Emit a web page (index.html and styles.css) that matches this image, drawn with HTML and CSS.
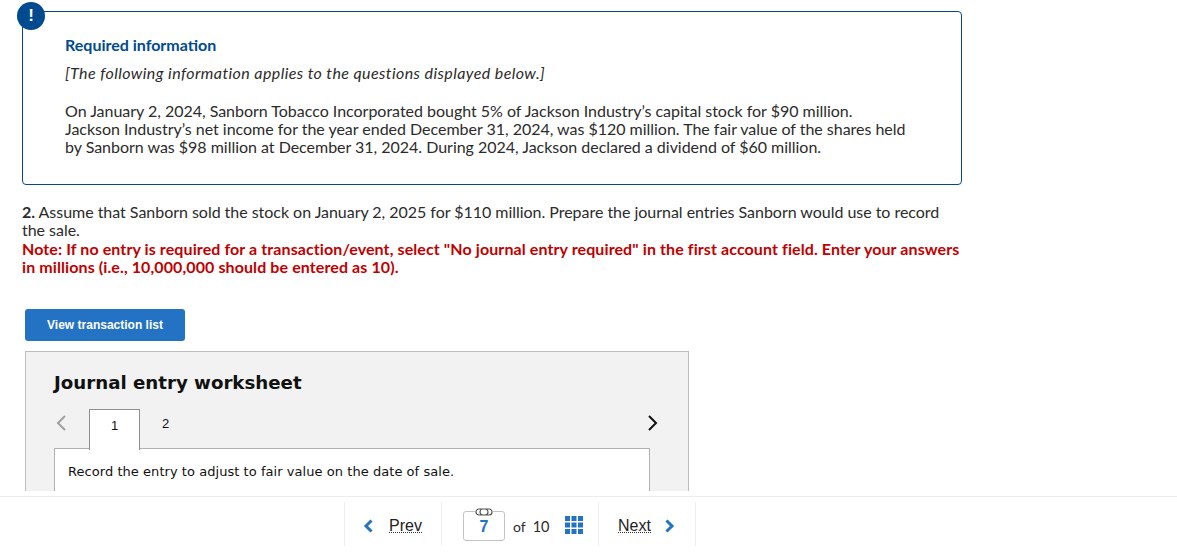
FILE: index.html
```html
<!DOCTYPE html>
<html lang="en">
<head>
<meta charset="utf-8">
<title>Required information</title>
<link rel="stylesheet" href="styles.css">
</head>
<body>
<main class="content">
  <section class="info-box">
    <span class="badge">!</span>
    <h2 class="info-title">Required information</h2>
    <p class="info-note">[The following information applies to the questions displayed below.]</p>
    <p class="info-text">On January 2, 2024, Sanborn Tobacco Incorporated bought 5% of Jackson Industry’s capital stock for $90 million. Jackson Industry’s net income for the year ended December 31, 2024, was $120 million. The fair value of the shares held by Sanborn was $98 million at December 31, 2024. During 2024, Jackson declared a dividend of $60 million.</p>
  </section>
  <section class="question">
    <p class="q-text"><strong>2.</strong> Assume that Sanborn sold the stock on January 2, 2025 for $110 million. Prepare the journal entries Sanborn would use to record the sale.</p>
    <p class="q-note">Note: If no entry is required for a transaction/event, select "No journal entry required" in the first account field. Enter your answers in millions (i.e., 10,000,000 should be entered as 10).</p>
  </section>
  <button class="view-btn" type="button">View transaction list</button>
  <section class="worksheet">
    <h3 class="ws-title">Journal entry worksheet</h3>
    <div class="ws-tabs">
      <svg class="chev" width="14" height="18" viewBox="0 0 14 18"><path d="M11 2 4 9l7 7" fill="none" stroke="#a0a0a0" stroke-width="2"/></svg>
      <span class="tab active">1</span>
      <span class="tab">2</span>
      <svg class="chev next" width="14" height="18" viewBox="0 0 14 18"><path d="M3 2l7 7-7 7" fill="none" stroke="#111" stroke-width="2"/></svg>
    </div>
    <div class="ws-body">Record the entry to adjust to fair value on the date of sale.</div>
  </section>
</main>
<footer class="footer">
  <nav class="pager">
    <a class="nav-btn prev">
      <svg width="12" height="16" viewBox="0 0 12 16"><path d="M9.500 2.500 4 8l5.500 5.500" fill="none" stroke="#2472c4" stroke-width="3"/></svg>
      <span class="nav-label">Prev</span>
    </a>
    <div class="pages">
      <div class="page-box">
        <svg class="link" width="18" height="8" viewBox="0 0 18 8"><path d="M8 1H4a3 3 0 0 0 0 6h6a3 3 0 0 0 0-6M10 7h4a3 3 0 0 0 0-6H8a3 3 0 0 0 0 6" fill="none" stroke="#555" stroke-width="1.200"/></svg>
        7
      </div>
      <span class="of">of</span><span class="total">10</span>
      <svg class="grid-icon" width="18" height="18" viewBox="0 0 18 18"><path fill="#2472c4" d="M0 0h5v5H0zM6.500 0h5v5h-5zM13 0h5v5h-5zM0 6.500h5v5H0zM6.500 6.500h5v5h-5zM13 6.500h5v5h-5zM0 13h5v5H0zM6.500 13h5v5h-5zM13 13h5v5h-5z"/></svg>
    </div>
    <a class="nav-btn next-btn">
      <span class="nav-label">Next</span>
      <svg width="12" height="16" viewBox="0 0 12 16"><path d="M2.500 2.500 8 8l-5.500 5.500" fill="none" stroke="#2472c4" stroke-width="3"/></svg>
    </a>
  </nav>
</footer>
</body>
</html>
```
FILE: styles.css
```css
* { box-sizing: border-box; }
html, body { margin: 0; height: 100%; overflow: hidden; background: #fff; }
body { display: flex; flex-direction: column; font-family: "Lato", "Liberation Sans", sans-serif; color: #2b2b2b; }
.content { height: 491px; overflow: hidden; padding: 11px 0 0 22px; flex: none; }
.info-box { position: relative; width: 940px; height: 174px; border: 1px solid #004a8f; border-radius: 4px; padding: 23px 42px 0; }
.badge { position: absolute; left: -6px; top: -10px; width: 28px; height: 28px; border-radius: 50%; background: #004a8f; color: #fff; font: bold 17px/28px "Liberation Sans", sans-serif; text-align: center; }
.info-title { margin: 0; font-size: 16px; line-height: 20px; font-weight: 700; color: #004a8f; }
.info-note { margin: 8px 0 0; font-size: 16px; line-height: 20px; font-style: italic; letter-spacing: 0.410px; }
.info-text { margin: 19px 0 0; font-size: 16px; line-height: 18px; width: 844px; letter-spacing: -0.020px; }
.question { width: 940px; margin-top: 18px; font-size: 16px; line-height: 18.400px; letter-spacing: -0.030px; }
.q-text, .q-note { margin: 0; }
.q-note { color: #c00000; font-weight: 700; letter-spacing: 0.100px; }
.view-btn { display: block; width: 160px; height: 32px; margin: 32px 0 0 3px; background: #2472c4; border: 0; border-radius: 3px; color: #fff; font: bold 12px "Liberation Sans", sans-serif; }
.worksheet { width: 664px; height: 160px; margin: 10px 0 0 3px; background: #f2f2f2; border: 1px solid #bdbdbd; padding: 20px 28px 0 28px; font-family: "DejaVu Sans", sans-serif; color: #111; }
.ws-title { margin: 0; font-size: 18.200px; line-height: 22px; font-weight: 700; }
.ws-tabs { display: flex; align-items: flex-end; height: 41px; margin-top: 14px; }
.chev { align-self: flex-start; margin: 6px 21px 0 0; flex: none; }
.chev.next { margin: 6px 0 0 auto; }
.tab { width: 51px; height: 41px; font: 13px/32px "Liberation Sans", sans-serif; text-align: center; }
.tab.active { background: #fff; border: 1px solid #8f8f8f; border-bottom: 0; position: relative; z-index: 1; margin-bottom: -1px; }
.ws-body { width: 596px; height: 60px; background: #fff; border: 1px solid #b0b0b0; padding: 13px; font-size: 13px; letter-spacing: 0.050px; line-height: 19px; margin-top: -1px; }
.footer { height: 64px; flex: none; border-top: 1px solid #ececec; margin-top: 5px; }
.pager { display: flex; width: 352px; height: 44px; margin: 5px 0 0 344px; border-left: 1px solid #f0f0f0; border-right: 1px solid #f0f0f0; }
.nav-btn { display: flex; align-items: center; padding-top: 4px; font: 16px "Liberation Sans", sans-serif; color: #222; }
.prev { width: 96px; padding-left: 17px; gap: 15px; }
.next-btn { width: 97px; padding-left: 19px; gap: 13px; border-left: 1px solid #f0f0f0; }
.nav-label { border-bottom: 1px dotted #333; line-height: 13px; }
.pages { display: flex; align-items: center; width: 157px; padding: 4px 0 0 21px; border-left: 1px solid #f0f0f0; }
.page-box { position: relative; width: 42px; height: 30px; border: 1px solid #c4c4c4; border-radius: 3px; color: #2472c4; font: bold 16px/29px "Liberation Sans", sans-serif; text-align: center; }
.link { position: absolute; left: 11px; top: -4px; background: #fff; }
.of { margin-left: 8px; font: 14px "Lato", sans-serif; }
.total { margin-left: 7px; font: 14.500px "Lato", sans-serif; }
.grid-icon { margin-left: 15px; position: relative; top: -1px; }
```
